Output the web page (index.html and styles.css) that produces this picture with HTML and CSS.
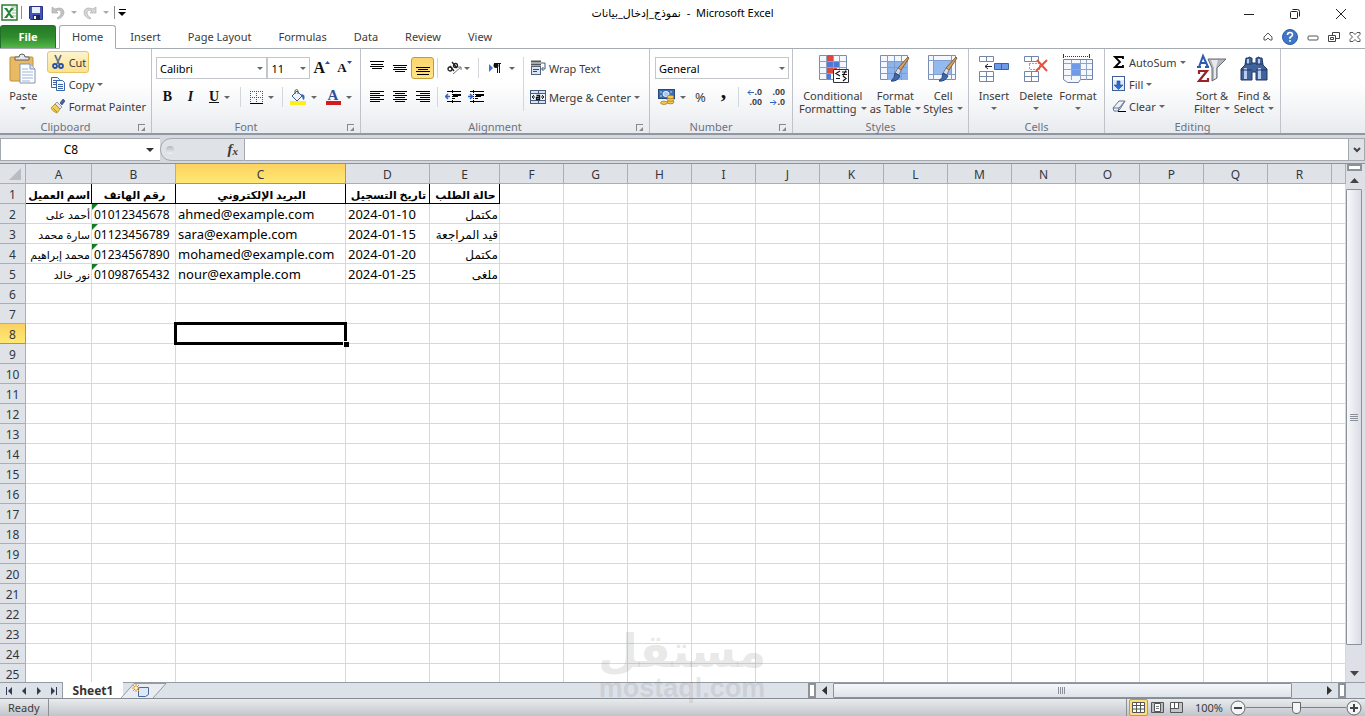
FILE: index.html
```html
<!DOCTYPE html>
<html lang="en">

<head>
    <meta charset="UTF-8">
    <meta name="viewport" content="width=device-width, initial-scale=1.0">
    <title>نموذج_إدخال_بيانات - Microsoft Excel</title>
    <link rel="stylesheet" href="styles.css">
</head>

<body>
    <header class="titlebar">
        <div class="quick">
            <svg width="17" height="17" viewBox="0 0 17 17"><rect x="1" y="1" width="15" height="15" fill="#fff" stroke="#2d7d32" stroke-width="1.5"/><path d="M10 3h5M11 6h4M11 9h4M11 12h4" stroke="#8bc08d"/><path d="M3 4h3l2 3 2-3h3l-4 5 4 5H10l-2-3-2 3H3l4-5z" fill="#23863a"/></svg>
            <span class="bar"></span>
            <button class="qbtn save" aria-label="Save"><svg width="14" height="14" viewBox="0 0 14 14"><path d="M.5.5h13v13h-12l-1-1z" fill="#4257b5" stroke="#26327f"/><path d="M3 1h8v6H3z" fill="#e9f0fb"/><path d="M4 9h7v5H4z" fill="#20264f"/><path d="M5 10h2v3H5z" fill="#fff"/></svg></button>
            <button class="qbtn" aria-label="Undo"><svg width="14" height="14" viewBox="0 0 14 14"><path d="M1 1v6h6L5 5q5-2 5 2 0 3-4 5l1 1q6-2 6-7Q12 0 4 3z" fill="#c3c3c3" stroke="#a5a5a5" stroke-width=".6"/></svg><i class="caret dim"></i></button>
            <button class="qbtn" aria-label="Redo"><svg width="14" height="14" viewBox="0 0 14 14"><path d="M13 1v6H7l2-2Q4 3 4 7q0 3 4 5l-1 1Q1 11 1 6 2 0 10 3z" fill="#d6d6d6" stroke="#a5a5a5" stroke-width=".6"/></svg><i class="caret dim"></i></button>
            <span class="bar"></span>
            <button class="more" aria-label="Customize Quick Access Toolbar"><i class="caret"></i></button>
        </div>
        <h1>نموذج_إدخال_بيانات&nbsp; - &nbsp;Microsoft Excel</h1>
        <div class="winbtns">
            <button aria-label="Minimize"><svg width="12" height="12"><path d="M1 6.5h10" stroke="#222"/></svg></button>
            <button aria-label="Restore"><svg width="12" height="12" fill="none" stroke="#222"><rect x="1.5" y="3.500" width="7" height="7" rx="1"/><path d="M3.500 1.500h5q2 0 2 2v5"/></svg></button>
            <button aria-label="Close"><svg width="12" height="12"><path d="M1 1l10 10M11 1L1 11" stroke="#222"/></svg></button>
        </div>
    </header>

    <nav class="tabs">
        <a class="file" href="#file">File</a>
        <a class="active" href="#home">Home</a>
        <a href="#insert">Insert</a>
        <a href="#layout">Page Layout</a>
        <a href="#formulas">Formulas</a>
        <a href="#data">Data</a>
        <a href="#review">Review</a>
        <a href="#view">View</a>
        <div class="tabtools">
            <button aria-label="Minimize ribbon"><svg width="10" height="10" fill="#fff" stroke="#555"><path d="M1 5l4-4 4 4v3H7L5 6 3 8H1z"/></svg></button>
            <button aria-label="Help"><svg width="16" height="16"><circle cx="8" cy="8" r="7.500" fill="#3f76c8" stroke="#2c5aa5"/><path d="M5.500 6q0-2.500 2.500-2.500t2.500 2.200Q10.500 7 8 8.500v1.200M8 11v1.800" fill="none" stroke="#fff" stroke-width="1.600"/></svg></button>
            <button aria-label="Minimize window"><svg width="12" height="12"><rect x="1" y="5" width="10" height="4" rx="1" fill="#fff" stroke="#555"/></svg></button>
            <button aria-label="Restore window"><svg width="12" height="12" fill="#fff" stroke="#444"><path d="M4.500 1.500h7v6h-7z"/><path d="M.5 4.500h7v6h-7z"/><path d="M2.500 6.500h3v2h-3z"/></svg></button>
            <button aria-label="Close window"><svg width="12" height="12" fill="#fff" stroke="#555"><path d="M1 1.500h3l2 2 2-2h3v2L8.500 6 11 8.500v2H8l-2-2-2 2H1v-2L3.500 6 1 3.500z"/></svg></button>
        </div>
    </nav>

    <section class="ribbon">
        <div class="group clipboard">
            <div class="tools">
                <button class="big">
                    <svg width="28" height="32" viewBox="0 0 28 32"><rect x="1" y="4" width="23" height="24" rx="1" fill="#e9b963" stroke="#c18f3c"/><path d="M6 6V4h4q0-3 3-3t3 3h4v3H6z" fill="#e6e8ec" stroke="#5a5f68"/><path d="M11 11h10l5 5v14H11z" fill="#fff" stroke="#7d92b5"/><path d="M21 11v5h5" fill="#dbe6f5" stroke="#7d92b5"/><path d="M13 16h6M13 19h11M13 22h11M13 25h11M13 28h8" stroke="#9db4d8"/></svg>
                    <span>Paste</span><i class="caret"></i>
                </button>
                <div class="stack">
                    <button class="small hot"><svg width="16" height="16" viewBox="0 0 16 16"><path d="M5 1l4 9M11 1L7 10" stroke="#64718a" stroke-width="1.800"/><circle cx="5" cy="12" r="2" fill="none" stroke="#2650a6" stroke-width="1.800"/><circle cx="11" cy="12" r="2" fill="none" stroke="#2650a6" stroke-width="1.800"/></svg>Cut</button>
                    <button class="small"><svg width="16" height="16" viewBox="0 0 16 16" fill="#f4f8ff" stroke="#3d63a8"><path d="M1.500 1.500h6l2 2v8h-8z"/><path d="M3 4.500h4M3 6.500h4M3 8.500h3"/><path d="M6.500 4.500h6l2 2v8h-8z"/><path d="M8 8.500h5M8 10.500h5M8 12.500h5"/></svg>Copy<i class="caret"></i></button>
                    <button class="small"><svg width="16" height="16" viewBox="0 0 16 16"><path d="M10 5l3-4 2 2-3 4z" fill="#4660a5" stroke="#26376e" stroke-width=".6"/><path d="M7 4l5 5-2 2-5-5z" fill="#e3e5ea" stroke="#74798a" stroke-width=".7"/><path d="M5 6l5 5-3 4q-4-1-6-5z" fill="#f2cf58" stroke="#a9852c" stroke-width=".8"/><path d="M3 10l4 4" stroke="#b88f2c"/></svg>Format Painter</button>
                </div>
            </div>
            <div class="caption">Clipboard<i class="launch"></i></div>
        </div>

        <div class="group font">
            <div class="tools rows">
                <div class="line">
                    <span class="combo face"><select aria-label="Font"><option>Calibri</option></select></span>
                    <span class="combo size"><select aria-label="Font size"><option>11</option></select></span>
                    <button class="tool serif grow" aria-label="Grow font">A<svg width="5" height="4"><path d="M0 3l2.500-3L5 3z" fill="#2b4d9b"/></svg></button>
                    <button class="tool serif shrink" aria-label="Shrink font">A<svg width="5" height="4"><path d="M0 0h5L2.500 3z" fill="#2b4d9b"/></svg></button>
                </div>
                <div class="line">
                    <button class="tool serif"><b>B</b></button>
                    <button class="tool serif"><em>I</em></button>
                    <button class="tool serif split"><u>U</u><i class="caret"></i></button>
                    <span class="sep"></span>
                    <button class="tool split" aria-label="Borders"><svg width="13" height="13"><path d="M.5 0v12M6.500 0v12M12.500 0v12M0 .5h13M0 6.500h13" stroke="#555" stroke-dasharray="1 1"/><path d="M0 12.500h13" stroke="#000"/></svg><i class="caret"></i></button>
                    <span class="sep"></span>
                    <button class="tool split" aria-label="Fill color"><svg width="16" height="16"><path d="M2 7l5-5 5 5-5 5z" fill="#eef3fa" stroke="#3b5c95"/><path d="M5 5V1.500q2-2 3 0V5" fill="none" stroke="#555"/><path d="M11 5q5 0 3 6-2-1-2-4z" fill="#3468b8"/><path d="M0 12h16v4H0z" fill="#ffee1c"/></svg><i class="caret"></i></button>
                    <button class="tool split fontcolor" aria-label="Font color"><span>A</span><i class="caret"></i></button>
                </div>
            </div>
            <div class="caption">Font<i class="launch"></i></div>
        </div>

        <div class="group alignment">
            <div class="tools">
                <div class="rows">
                    <div class="line">
                        <button class="tool" aria-label="Top align"><svg width="14" height="14"><path d="M0 .5h14M1 3.500h12M0 5.500h14M2 7.500h10" stroke="#000"/></svg></button>
                        <button class="tool" aria-label="Middle align"><svg width="14" height="14"><path d="M0 4.500h14M1 6.500h12M0 8.500h14M2 10.500h10" stroke="#000"/></svg></button>
                        <button class="tool on" aria-label="Bottom align"><svg width="14" height="14"><path d="M0 6.500h14M2 8.500h10M0 10.500h14M1 13.500h12" stroke="#000"/></svg></button>
                        <span class="sep"></span>
                        <button class="tool split" aria-label="Orientation"><svg width="16" height="14" viewBox="0 0 16 14"><g fill="none" stroke="#222" stroke-width="1.300"><circle cx="4" cy="8" r="2"/><path d="M4 5l4 5M6 1l5 6"/><circle cx="9.500" cy="4.500" r="2"/></g><path d="M7 13l8-7M12 6h3v3" fill="none" stroke="#777"/></svg><i class="caret"></i></button>
                        <span class="sep"></span>
                        <button class="tool split direction" aria-label="Text direction"><svg width="14" height="12"><path d="M1 2l4 4-4 4z" fill="#3f73d6"/><path d="M6 1h7v1H6zM9 1h1v10H9zM11 1h1v10h-1z" fill="#111"/><circle cx="8" cy="3.500" r="2.500" fill="#111"/></svg><i class="caret"></i></button>
                    </div>
                    <div class="line">
                        <button class="tool" aria-label="Align left"><svg width="14" height="12"><path d="M0 .5h14M0 2.500h10M0 4.500h14M0 6.500h10M0 8.500h14M0 10.500h10" stroke="#000"/></svg></button>
                        <button class="tool" aria-label="Center"><svg width="14" height="12"><path d="M0 .5h14M2 2.500h10M0 4.500h14M2 6.500h10M0 8.500h14M2 10.500h10" stroke="#000"/></svg></button>
                        <button class="tool" aria-label="Align right"><svg width="14" height="12"><path d="M0 .5h14M4 2.500h10M0 4.500h14M4 6.500h10M0 8.500h14M4 10.500h10" stroke="#000"/></svg></button>
                        <span class="sep"></span>
                        <button class="tool" aria-label="Decrease indent"><svg width="16" height="14"><path d="M2 1.500h14M7 4.500h9M7 6.500h6M7 8.500h3M2 11.500h14" stroke="#000"/><path d="M8 4h8v2H8z"/><path d="M7.500 0v14" stroke="#000" stroke-dasharray="1 1"/><path d="M5 6.500H1M3 4L0.500 6.500 3 9" fill="none" stroke="#3366c4" stroke-width="1.500"/></svg></button>
                        <button class="tool" aria-label="Increase indent"><svg width="16" height="14"><path d="M2 1.500h14M7 4.500h9M7 6.500h6M7 8.500h3M2 11.500h14" stroke="#000"/><path d="M8 4h8v2H8z"/><path d="M5.500 0v14" stroke="#000" stroke-dasharray="1 1"/><path d="M0 6.500h4M2 4l2.500 2.500L2 9" fill="none" stroke="#3366c4" stroke-width="1.500"/></svg></button>
                    </div>
                </div>
                <span class="sep tall"></span>
                <div class="rows">
                    <button class="small"><svg width="16" height="16"><path d="M1 1.500h10M1 4.500h10" stroke="#555" stroke-width="2"/><path d="M11 3h4v6h-3M13.500 7l-2 2 2 2" fill="none" stroke="#3e587f"/><rect x="1.500" y="6.500" width="9" height="8" fill="#d9e6f7" stroke="#52637e"/><path d="M3 9.500h6M3 11.500h4" stroke="#444"/></svg>Wrap Text</button>
                    <button class="small"><svg width="16" height="16"><rect x=".5" y="1.500" width="15" height="13" fill="#d4e3f6" stroke="#455a7c"/><path d="M1 4.500h14M1 11.500h14M8.500 2v2M8.500 12v2" stroke="#455a7c"/><path d="M1 5h14v6H1z" fill="#eef5fd"/><path d="M5 8H2M4 6L2 8l2 2M11 8h3M12 6l2 2-2 2" fill="none" stroke="#222"/><path d="M6.500 6.500h3v4h-3v-2h3" fill="none" stroke="#111" stroke-width="1.300"/></svg>Merge &amp; Center<i class="caret"></i></button>
                </div>
            </div>
            <div class="caption">Alignment<i class="launch"></i></div>
        </div>

        <div class="group number">
            <div class="tools rows">
                <div class="line">
                    <span class="combo format"><select aria-label="Number format"><option>General</option></select></span>
                </div>
                <div class="line">
                    <button class="tool split" aria-label="Accounting format"><svg width="17" height="16"><rect x=".5" y=".5" width="16" height="9" fill="#3e6fb4" stroke="#234780"/><ellipse cx="8" cy="5" rx="3" ry="2.500" fill="#a9c6ec" stroke="#e7f0fb"/><path d="M2 3h2M12 3h2M2 7h2" stroke="#bcd3f0"/><g fill="#f5cb55" stroke="#a87416" stroke-width=".8"><ellipse cx="12.500" cy="13" rx="3.500" ry="1.800"/><ellipse cx="12.500" cy="10.500" rx="3.500" ry="1.800"/><ellipse cx="12.500" cy="8" rx="3.500" ry="1.800"/><ellipse cx="6" cy="13.800" rx="3.500" ry="1.600"/></g></svg><i class="caret"></i></button>
                    <button class="tool percent">%</button>
                    <button class="tool serif comma"><b>,</b></button>
                    <span class="sep"></span>
                    <button class="tool decimals" aria-label="Increase decimal"><span><svg width="7" height="7"><path d="M7 3.500H1M3.500 1L1 3.500 3.500 6" fill="none" stroke="#2f62c0"/></svg>.0</span><span>.00</span></button>
                    <button class="tool decimals" aria-label="Decrease decimal"><span>.00</span><span><svg width="7" height="7"><path d="M0 3.500h6M3.500 1L6 3.500 3.500 6" fill="none" stroke="#2f62c0"/></svg>.0</span></button>
                </div>
            </div>
            <div class="caption">Number<i class="launch"></i></div>
        </div>

        <div class="group styles">
            <div class="tools">
                <button class="big wide">
                    <svg width="32" height="32" viewBox="0 0 32 32"><path d="M2.500 2.500h27v24h-27z" fill="#f4f8fe" stroke="#7a8db0"/><path d="M9 2h7v6H9zM9 14h11v6H9z" fill="#dc4a3f"/><path d="M9 8h13v6H9zM9 20h5v6H9z" fill="#5078d8"/><path d="M2 8.500h27M2 14.500h27M2 20.500h27M9.500 2v25M16.500 2v25M22.500 2v25" stroke="#8ea0c0"/><path d="M16.500 16.500h15v13h-15z" fill="#fff" stroke="#333"/><path d="M23 18l-4 2.500 4 2.500M19 25.500h4M25 19h5M25 21.500h5M29 17.500l-3 5M26 23l3 2.500-3 2.500" fill="none" stroke="#111" stroke-width="1.200"/></svg>
                    <span>Conditional</span><span>Formatting<i class="caret"></i></span>
                </button>
                <button class="big mid">
                    <svg width="32" height="32" viewBox="0 0 32 32"><path d="M1.500 2.500h27v24h-27z" fill="#f4f8fe" stroke="#7a8db0"/><path d="M8 9h21v18H8z" fill="#8db3ec"/><path d="M1 8.500h27M1 14.500h27M1 20.500h27M8.500 2v25M15.500 2v25M22.500 2v25" stroke="#7f9ccd"/><path d="M30 5l-8 12-3-2L29 4z" fill="#d9a05a" stroke="#865d34"/><path d="M22 17l-3-2-3 5 4 2z" fill="#d8dce3" stroke="#737b88"/><path d="M16 20l5 3q-3 6-9 5 4-3 4-8z" fill="#3f68af" stroke="#28447c"/></svg>
                    <span>Format</span><span>as Table<i class="caret"></i></span>
                </button>
                <button class="big">
                    <svg width="32" height="32" viewBox="0 0 32 32"><path d="M1.500 2.500h27v24h-27z" fill="#f4f8fe" stroke="#7a8db0"/><path d="M1 7.500h27M1 21.500h27M6.500 2v25M24.500 2v25" stroke="#7f9ccd"/><path d="M7 8h17v13H7z" fill="#94b9ef"/><path d="M30 5l-8 12-3-2L29 4z" fill="#d9a05a" stroke="#865d34"/><path d="M22 17l-3-2-3 5 4 2z" fill="#d8dce3" stroke="#737b88"/><path d="M16 20l5 3q-3 6-9 5 4-3 4-8z" fill="#3f68af" stroke="#28447c"/></svg>
                    <span>Cell</span><span>Styles<i class="caret"></i></span>
                </button>
            </div>
            <div class="caption">Styles</div>
        </div>

        <div class="group cells">
            <div class="tools">
                <button class="big">
                    <svg width="32" height="32" viewBox="0 0 32 32"><g fill="#fff" stroke="#7186ab"><path d="M1.500 3.500h14v5h-14zM8.500 3.500v5M1.500 18.500h14v10h-14zM8.500 18.500v10M1.500 23.500h14"/><path d="M16.500 10.500h14v6h-14z" fill="#6d9be9" stroke="#3d62a5"/><path d="M23.500 10.500v6" stroke="#3d62a5"/></g><path d="M14 13.500H7M10 11l-3 2.500 3 2.500" fill="none" stroke="#222"/></svg>
                    <span>Insert</span><i class="caret"></i>
                </button>
                <button class="big">
                    <svg width="32" height="32" viewBox="0 0 32 32"><path d="M4.500 3.500h14v5h-14zM11.500 3.500v5M4.500 18.500h14v10h-14zM11.500 18.500v10M4.500 23.500h14" fill="#fff" stroke="#7186ab"/><path d="M9.500 10.500h10v6h-10z" fill="none" stroke="#2c4780" stroke-dasharray="1 2"/><path d="M17 7l10 11M27 7L16 18" stroke="#e5533d" stroke-width="2"/></svg>
                    <span>Delete</span><i class="caret"></i>
                </button>
                <button class="big">
                    <svg width="32" height="32" viewBox="0 0 32 32"><path d="M1.500 1v4M27.500 1v4" stroke="#334"/><path d="M3 3.500h24" stroke="#334" stroke-dasharray="1 1"/><path d="M1.500 6.500h29v20h-12l-2 3h-11l-4-3z" fill="#f4f8fe" stroke="#6e82a8"/><path d="M10 11h8v11h-8z" fill="#6f9aea"/><path d="M2 10.500h28M2 16.500h28M2 22.500h28M9.500 7v20M18.500 7v20M24.500 7v20" stroke="#93a5c5"/></svg>
                    <span>Format</span><i class="caret"></i>
                </button>
            </div>
            <div class="caption">Cells</div>
        </div>

        <div class="group editing">
            <div class="tools">
                <div class="stack">
                    <button class="small"><svg width="14" height="14"><path d="M11 4V2H3l5 5-5 5h8v-2" fill="none" stroke="#000" stroke-width="1.800"/></svg>AutoSum<i class="caret"></i></button>
                    <button class="small"><svg width="14" height="16"><rect x=".5" y=".5" width="12" height="14" fill="#dfeafa" stroke="#3f5f9a"/><path d="M1 1h11v3H1z" fill="#fff"/><path d="M5 5h3v4h3l-4.500 4.500L2 9h3z" fill="#2f6bd6" stroke="#1d489b" stroke-width=".6"/></svg>Fill<i class="caret"></i></button>
                    <button class="small"><svg width="14" height="14"><path d="M1 9l6-7h6l-5 8-2 2H2z" fill="#eef1f6" stroke="#66748d"/><path d="M1 9h6l6-7M7 9l-1 3" fill="none" stroke="#66748d"/><path d="M6 12.500h8" stroke="#000"/></svg>Clear<i class="caret"></i></button>
                </div>
                <button class="big">
                    <svg width="32" height="32" viewBox="0 0 32 32"><path d="M12 6h18l-9 9v10l-5 3V15z" fill="#b4b7bd" stroke="#666a72"/><path d="M15 7h7l-2 8v10l-2 1V15z" fill="#e8e9ec"/><path d="M3 14L7 3l5 11M4 10h6M1 14h4M9 14h4" fill="none" stroke="#2f5cae" stroke-width="2"/><path d="M3 21v-3h8L3 28h9v-3" fill="none" stroke="#96242a" stroke-width="2.200"/></svg>
                    <span>Sort &amp;</span><span>Filter<i class="caret"></i></span>
                </button>
                <button class="big">
                    <svg width="32" height="32" viewBox="0 0 32 32"><path d="M8 5h2q2-2 3 0h1v5h4V5h1q2-2 3 0h2l1 7 4 4v11H18v-8h-4v8H3V16l4-4z" fill="#41629c" stroke="#203762"/><path d="M9 6h2v5H9zM20 6h2v5h-2zM6 15h3v11H6zM20 15h3v11h-3z" fill="#b7cdf0"/><path d="M3 17h11M18 17h11M7 11h7M18 11h7" stroke="#203762"/></svg>
                    <span>Find &amp;</span><span>Select<i class="caret"></i></span>
                </button>
            </div>
            <div class="caption">Editing</div>
        </div>
    </section>

    <section class="formulabar">
        <label class="namebox"><input type="text" value="C8" aria-label="Name Box"><i class="caret"></i></label>
        <div class="fx"><i class="knob"></i><button aria-label="Insert Function">f<small>x</small></button></div>
        <input class="formula" type="text" aria-label="Formula">
        <button class="expand" aria-label="Expand formula bar"><svg width="8" height="6"><path d="M1 1l3 3 3-3" fill="none" stroke="#444" stroke-width="2"/></svg></button>
    </section>

    <main class="workspace">
        <div class="sheet">
            <table id="grid"></table>
        </div>
        <div class="vscroll">
            <span class="splitter"></span>
            <button aria-label="Scroll up"><svg width="9" height="5"><path d="M0 5l4.500-5L9 5z" fill="#444"/></svg></button>
            <div class="thumb"><i class="grip"></i></div>
            <button class="down" aria-label="Scroll down"><svg width="9" height="5"><path d="M0 0h9L4.500 5z" fill="#444"/></svg></button>
        </div>
    </main>

    <footer class="sheetbar">
        <div class="sheetnav">
            <button aria-label="First sheet"><svg width="8" height="8"><path d="M1 0h1v8H1zM7 0v8L3 4z" fill="#333d4d"/></svg></button>
            <button aria-label="Previous sheet"><svg width="8" height="8"><path d="M6 0v8L2 4z" fill="#333d4d"/></svg></button>
            <button aria-label="Next sheet"><svg width="8" height="8"><path d="M2 0v8l4-4z" fill="#333d4d"/></svg></button>
            <button aria-label="Last sheet"><svg width="8" height="8"><path d="M6 0h1v8H6zM1 0v8l4-4z" fill="#333d4d"/></svg></button>
        </div>
        <a class="sheettab" href="#sheet1">Sheet1</a>
        <button class="newsheet" aria-label="Insert Worksheet"><svg width="46" height="16"><path d="M0 15L13 .5h32L32 15" fill="#e9edf2" stroke="#949ba5"/><path d="M17.500 4.500h10v7l-3 2h-7z" fill="#dce9fa" stroke="#4d6a9c"/><path d="M15 1v8M11 5h8M12 2l6 6M18 2l-6 6" stroke="#dc9433"/><circle cx="15" cy="5" r="1.500" fill="#fff4b8"/></svg></button>
        <div class="hscroll">
            <span class="splitter"></span>
            <button aria-label="Scroll left"><svg width="5" height="9"><path d="M5 0v9L0 4.500z" fill="#333"/></svg></button>
            <div class="htrack"><div class="hthumb"><i class="grip"></i></div></div>
            <button aria-label="Scroll right"><svg width="5" height="9"><path d="M0 0v9l5-4.500z" fill="#333"/></svg></button>
            <span class="splitter"></span>
        </div>
    </footer>

    <footer class="status">
        <span class="ready">Ready</span>
        <div class="views">
            <button class="on" aria-label="Normal"><svg width="13" height="11"><path d="M.5.5h12v10H.5zM.5 3.500h12M.5 7h12M4.500.5v10M8.500.5v10" fill="#fff" stroke="#555"/></svg></button>
            <button aria-label="Page Layout"><svg width="13" height="11"><path d="M.5.5h12v10H.5z" fill="#b9bdc3" stroke="#555"/><path d="M3.500 1.500h6v8h-6z" fill="#fff" stroke="#555"/><path d="M5 4.500h3M5 6.500h3" stroke="#777"/></svg></button>
            <button aria-label="Page Break Preview"><svg width="13" height="11"><path d="M.5.5h12v10H.5z" fill="#c3c6cb" stroke="#555"/><path d="M1 1h3v5H1zM5 1h3v5H5z" fill="#fff"/><path d="M4.500 0v6M8.500 0v6.500H0" fill="none" stroke="#555"/></svg></button>
        </div>
        <label class="zoom" for="zoom">100%</label>
        <button class="round" aria-label="Zoom out"><svg width="16" height="16"><circle cx="8" cy="8" r="7" fill="#f3f4f6" stroke="#666"/><path d="M4 8h8" stroke="#444" stroke-width="2"/></svg></button>
        <input id="zoom" type="range" min="0" max="200" value="100">
        <button class="round" aria-label="Zoom in"><svg width="16" height="16"><circle cx="8" cy="8" r="7" fill="#f3f4f6" stroke="#666"/><path d="M4 8h8M8 4v8" stroke="#444" stroke-width="2"/></svg></button>
    </footer>

    <div class="watermark">
        <p class="ar" lang="ar">مستقل</p>
        <p>mostaql.com</p>
    </div>

    <script src="script.js"></script>
</body>

</html>
```

FILE: styles.css
```css
* {
    box-sizing: border-box;
}

body {
    margin: 0;
    height: 100vh;
    display: flex;
    flex-direction: column;
    overflow: hidden;
    background-color: white;
    color: #3b3b3b;
    font-family: "Noto Sans", "DejaVu Sans", sans-serif;
    font-size: 11px;
    position: relative;
}

button {
    border: none;
    background: none;
    padding: 0;
    margin: 0;
    color: inherit;
    font: inherit;
    display: flex;
    align-items: center;
    justify-content: center;
}

svg {
    display: block;
    flex: none;
}

input,
select {
    font: inherit;
    color: black;
    margin: 0;
    border-radius: 0;
}

.caret {
    display: block;
    flex: none;
    border: 3px solid transparent;
    border-top-color: #666;
    border-bottom: none;
}

.caret.dim {
    border-top-color: #aaa;
}

/* title bar */
.titlebar {
    height: 25px;
    display: grid;
    grid-template-columns: 1fr auto 1fr;
    align-items: center;
}

.quick {
    display: flex;
    align-items: center;
    padding-left: 1px;
    height: 23px;
}

.bar {
    width: 1px;
    height: 13px;
    background-color: #8c8c8c;
    margin: 0 3px;
}

.qbtn {
    gap: 6px;
    margin-left: 4px;
    margin-right: 2px;
}

.qbtn.save {
    margin-right: 4px;
}

.more {
    flex-direction: column;
    gap: 2px;
}

.more::before {
    content: "";
    width: 7px;
    height: 1px;
    background-color: black;
}

.more .caret {
    border-width: 4px;
    border-bottom: none;
    border-top-color: black;
}

.titlebar h1 {
    margin: 0;
    font-size: 11px;
    font-weight: normal;
    color: black;
}

.winbtns {
    display: flex;
    justify-content: flex-end;
    align-self: end;
    gap: 34px;
    padding-right: 18px;
    padding-bottom: 5px;
}

/* ribbon tabs */
.tabs {
    display: flex;
    height: 24px;
    border-bottom: 1px solid #a6abb2;
}

.tabs a {
    height: 24px;
    line-height: 24px;
    padding: 0 13px;
    margin-right: 1px;
    color: #3b3b3b;
    text-decoration: none;
    border-radius: 3px 3px 0 0;
    white-space: nowrap;
}

.tabs .file {
    width: 56px;
    height: 23px;
    padding: 0;
    margin-right: 3px;
    text-align: center;
    line-height: 22px;
    color: white;
    font-weight: bold;
    background: linear-gradient(#237a25, #2f8a2d 50%, #54b847);
    border: 1px solid #20702a;
    border-bottom: none;
}

.tabs .active {
    line-height: 22px;
    padding: 0 12px;
    background-color: white;
    border: 1px solid #a6abb2;
    border-bottom-color: white;
}

.tabtools {
    display: flex;
    gap: 9px;
    margin-left: auto;
    padding-right: 4px;
}

/* ribbon */
.ribbon {
    display: flex;
    height: 86px;
    flex: none;
    background: linear-gradient(white 40%, #e8ebef);
    border-bottom: 2px solid #92969f;
}

.group {
    display: flex;
    flex-direction: column;
    flex: none;
    border-right: 1px solid #bfc3c9;
}

.clipboard {
    width: 152px;
}

.clipboard .big {
    margin-right: 2px;
}

.font {
    width: 209px;
}

.alignment {
    width: 289px;
}

.number {
    width: 143px;
}

.styles,
.editing {
    width: 176px;
}

.cells {
    width: 136px;
}

.tools {
    display: flex;
    height: 69px;
    padding: 2px 4px 0;
}

.clipboard .tools {
    padding: 2px 2px 0;
}

.caption {
    position: relative;
    height: 15px;
    line-height: 17px;
    text-align: center;
    padding-right: 20px;
    color: #6b7280;
}

.styles .caption,
.cells .caption,
.editing .caption {
    padding-right: 0;
}

.launch {
    position: absolute;
    right: 6px;
    top: 6px;
    width: 7px;
    height: 7px;
    border-left: 1px solid #888;
    border-top: 1px solid #888;
}

.launch::after {
    content: "";
    position: absolute;
    right: 0;
    bottom: 0;
    border: 2px solid #888;
    border-left-color: transparent;
    border-top-color: transparent;
}

.big {
    flex-direction: column;
    justify-content: flex-start;
    align-self: flex-start;
    width: 42px;
    line-height: 13px;
    padding-top: 2px;
    white-space: nowrap;
}

.big svg {
    height: 32px;
    margin-bottom: 4px;
}

.big span {
    display: flex;
    align-items: center;
    gap: 4px;
}

.big > .caret {
    margin-top: 5px;
}

.big.wide {
    width: 72px;
}

.big.mid {
    width: 54px;
}

.stack {
    display: flex;
    flex-direction: column;
    align-items: flex-start;
}

.small {
    height: 22px;
    gap: 3px;
    padding: 0 2px;
    justify-content: flex-start;
    white-space: nowrap;
    border: 1px solid transparent;
}

.clipboard .big {
    width: 44px;
}

.hot {
    border-color: #e8c562;
    border-radius: 3px;
    background: linear-gradient(#fdf3cf, #fce28d);
}

.rows {
    display: flex;
    flex-direction: column;
    gap: 7px;
    padding-top: 8px;
}

.line {
    display: flex;
    align-items: center;
    height: 22px;
}

.tool {
    width: 23px;
    height: 22px;
}

.tool.split {
    width: 38px;
    gap: 6px;
}

.tool.on {
    border: 1px solid #c29b3c;
    border-radius: 3px;
    background: linear-gradient(#fbd56f, #ffe684);
}

.serif {
    font-family: "Liberation Serif", serif;
    font-size: 14px;
    font-weight: bold;
    color: #111;
}

.grow {
    font-size: 16px;
}

.shrink {
    font-size: 13px;
}

.grow svg,
.shrink svg {
    align-self: flex-start;
    margin-top: 4px;
}

.sep {
    width: 1px;
    height: 20px;
    margin: 0 3px;
    background-color: #d3d6da;
}

.sep.tall {
    height: 54px;
    margin: 8px 3px 0;
}

.combo {
    position: relative;
    display: flex;
}

.combo select {
    appearance: none;
    width: 100%;
    height: 22px;
    padding: 0 3px;
    border: 1px solid #c3c7cc;
    background-color: white;
}

.combo::after {
    content: "";
    position: absolute;
    right: 4px;
    top: 10px;
    border: 3px solid transparent;
    border-top-color: #666;
    border-bottom: none;
}

.face {
    width: 112px;
}

.size {
    width: 43px;
}

.format {
    width: 134px;
}

.font .tools {
    padding: 8px 4px 0;
}

.font .split {
    width: 35px;
    gap: 5px;
}

.fontcolor span {
    width: 15px;
    height: 16px;
    line-height: 13px;
    font-family: "Liberation Serif", serif;
    font-size: 15px;
    font-weight: bold;
    color: #2f4f9a;
    border-bottom: 4px solid #d11d1d;
}

.alignment .tools {
    padding-top: 0;
}

.alignment .split {
    width: 34px;
    gap: 2px;
}

.alignment .direction {
    width: 38px;
    gap: 7px;
}

.percent {
    font-size: 13px;
}

.comma {
    font-size: 22px;
    line-height: 10px;
    align-items: flex-start;
}

.number .tools {
    padding: 8px 3px 0 5px;
}

.number .split {
    width: 34px;
    gap: 5px;
}

.decimals {
    flex-direction: column;
    align-items: flex-end;
    padding-right: 3px;
    font-family: "Liberation Sans", Arial, sans-serif;
    font-size: 9px;
    line-height: 10px;
    font-weight: bold;
}

.decimals span {
    display: flex;
    align-items: center;
}

.editing .stack {
    width: 82px;
}

/* formula bar */
.formulabar {
    display: flex;
    height: 28px;
    flex: none;
    padding: 3px 0 2px;
    background-color: #d5d9df;
}

.namebox {
    display: flex;
    align-items: center;
    width: 160px;
    background-color: white;
    border: 1px solid #a4a9b0;
    border-right: none;
}

.namebox input {
    width: 140px;
    border: none;
    outline: none;
    padding: 0;
    text-align: center;
    font-size: 12px;
}

.namebox .caret {
    border-width: 4px;
    border-bottom: none;
    border-top-color: #333;
    margin-left: 5px;
}

.fx {
    display: flex;
    align-items: center;
    justify-content: space-between;
    width: 85px;
    padding: 0 6px 0 5px;
    background-color: #dfe2e7;
    border: 1px solid #a4a9b0;
    border-radius: 11px 0 0 11px;
}

.knob {
    width: 8px;
    height: 8px;
    border-radius: 4px;
    background: linear-gradient(#b3b8bf, #f0f2f4);
}

.fx button {
    font-family: "Liberation Serif", serif;
    font-size: 15px;
    font-style: italic;
    font-weight: bold;
}

.fx small {
    font-size: 11px;
    padding-top: 3px;
}

.formula {
    flex: 1;
    border: 1px solid #a4a9b0;
    border-left: none;
    outline: none;
}

.expand {
    width: 16px;
    background-color: #dfe2e7;
    border: 1px solid #a4a9b0;
    border-left: none;
}

/* grid */
.workspace {
    display: flex;
    flex: 1;
    min-height: 0;
    border-top: 1px solid #8e949c;
}

.sheet {
    flex: 1;
    overflow: hidden;
}

#grid {
    table-layout: fixed;
    width: 100%;
    border-collapse: separate;
    border-spacing: 0;
    font-size: 13px;
    color: black;
}

#grid th,
#grid td {
    position: relative;
    height: 20px;
    padding: 2px 2px 0;
    line-height: 17px;
    white-space: nowrap;
    border-right: 1px solid #d6d8da;
    border-bottom: 1px solid #d6d8da;
}

#grid th {
    font-size: 12px;
    font-weight: normal;
    color: #33373d;
    background-color: #dfe3e8;
    border-color: #a9afb7;
}

#grid col {
    width: 64px;
}

#grid col.rowhead {
    width: 26px;
}

#grid col.a {
    width: 66px;
}

#grid col.b,
#grid col.d {
    width: 84px;
}

#grid col.c {
    width: 170px;
}

#grid col.e {
    width: 70px;
}

#grid col.rest {
    width: auto;
}

#grid th.current {
    border-color: #c3913c;
    background: linear-gradient(#fbd262, #ffe873);
}

#grid td.phone {
    font-size: 12px;
}

#grid td.phone::before {
    content: "";
    position: absolute;
    left: 0;
    top: 0;
    border: 3px solid #157a24;
    border-right-color: transparent;
    border-bottom-color: transparent;
}

#grid td[dir="rtl"] {
    font-size: 12px;
    text-align: right;
}

#grid td.name {
    font-size: 11px;
}

#grid td.head {
    font-size: 11px;
    font-weight: bold;
    text-align: center;
    border-color: black;
}

.corner::after {
    content: "";
    position: absolute;
    right: 4px;
    bottom: 3px;
    border: 6px solid #b9bdc3;
    border-left-color: transparent;
    border-top-color: transparent;
}

.cursor {
    position: absolute;
    inset: -2px;
    border: 3px solid black;
    z-index: 1;
}

.cursor::after {
    content: "";
    position: absolute;
    right: -5px;
    bottom: -5px;
    width: 5px;
    height: 5px;
    background-color: black;
    border-left: 1px solid white;
    border-top: 1px solid white;
    box-sizing: content-box;
}

.vscroll {
    display: flex;
    flex-direction: column;
    width: 19px;
    padding-right: 3px;
    background-color: #dde1e7;
}

.vscroll .splitter {
    height: 7px;
    margin-left: 1px;
    border: 2px solid #8d9299;
    background-color: white;
}

.vscroll button {
    height: 18px;
}

.thumb {
    flex: 1;
    margin-bottom: 19px;
    display: flex;
    align-items: center;
    justify-content: center;
    border: 1px solid #8b929c;
    border-radius: 1px;
    background: linear-gradient(to right, #f7f8fa, #d9dde4);
}

.grip {
    width: 8px;
    height: 7px;
    background: repeating-linear-gradient(#8a9099 0 1px, transparent 1px 2px);
}

/* sheet tabs */
.sheetbar {
    display: flex;
    height: 17px;
    flex: none;
    background-color: #dde2e9;
    border-top: 1px solid #969ca5;
    border-bottom: 1px solid #858b93;
}

.sheetnav {
    display: flex;
    align-items: center;
    gap: 7px;
    width: 63px;
    padding-left: 5px;
    border-right: 1px solid #969ca5;
}

.sheettab {
    width: 60px;
    margin-top: -1px;
    line-height: 18px;
    text-align: center;
    font-size: 12px;
    font-weight: bold;
    color: #333;
    text-decoration: none;
    background-color: white;
}

.newsheet {
    margin-left: -2px;
}

.hscroll {
    display: flex;
    flex: 1;
    max-width: 557px;
    margin-left: auto;
    padding-right: 19px;
}

.hscroll .splitter {
    width: 8px;
    border: 2px solid #8d9299;
    background-color: white;
}

.hscroll button {
    width: 17px;
}

.htrack {
    flex: 1;
}

.hthumb {
    width: 94%;
    height: 15px;
    display: flex;
    align-items: center;
    justify-content: center;
    border: 1px solid #8b929c;
    border-radius: 1px;
    background: linear-gradient(#f5f7fa, #dfe3ea);
}

.hthumb .grip {
    background: repeating-linear-gradient(to right, #8a9099 0 1px, transparent 1px 2px);
}

/* status bar */
.status {
    display: flex;
    align-items: center;
    height: 17px;
    flex: none;
    padding-right: 3px;
    background: linear-gradient(#e9ebee, #c1c5ca);
}

.ready {
    width: 49px;
    padding-left: 8px;
    line-height: 19px;
    border-right: 1px solid #8c9198;
}

.views {
    display: flex;
    margin-left: auto;
    padding-left: 2px;
    border-left: 1px solid #8c9198;
}

.views button {
    width: 19px;
    height: 17px;
}

.views .on {
    border: 1px solid #c29b3c;
    border-radius: 2px;
    background-color: #ffdf79;
}

.zoom {
    margin: 0 7px 0 9px;
    line-height: 19px;
}

#zoom {
    appearance: none;
    width: 100px;
    height: 16px;
    background: linear-gradient(#7d828a, #7d828a) center / 100% 1px no-repeat;
}

#zoom::-webkit-slider-thumb {
    appearance: none;
    width: 9px;
    height: 12px;
    background-color: #f4f5f7;
    border: 1px solid #666;
    border-radius: 1px 1px 5px 5px;
}

/* watermark over the grid */
.watermark {
    position: absolute;
    left: 600px;
    bottom: 14px;
    width: 164px;
    display: flex;
    flex-direction: column;
    align-items: center;
    color: rgba(120, 120, 120, 0.18);
    font-family: "Liberation Sans", Arial, sans-serif;
    font-size: 27px;
    font-weight: bold;
    line-height: 27px;
    pointer-events: none;
}

.watermark p {
    margin: 0;
}

.watermark .ar {
    font-family: "DejaVu Sans", sans-serif;
    font-size: 46px;
    line-height: 48px;
}
```

FILE: script.js
```js
const columns = 'ABCDEFGHIJKLMNOPQR'.split('');
const current = { col: 'C', row: 8 };
const data = [
    ['اسم العميل', 'رقم الهاتف', 'البريد الإلكتروني', 'تاريخ التسجيل', 'حالة الطلب'],
    ['أحمد على', '01012345678', 'ahmed@example.com', '2024-01-10', 'مكتمل'],
    ['سارة محمد', '01123456789', 'sara@example.com', '2024-01-15', 'قيد المراجعة'],
    ['محمد إبراهيم', '01234567890', 'mohamed@example.com', '2024-01-20', 'مكتمل'],
    ['نور خالد', '01098765432', 'nour@example.com', '2024-01-25', 'ملغى']
];

const grid = document.getElementById('grid');

let html = '<colgroup><col class="rowhead">';
columns.forEach(c => {
    html += `<col class="${c.toLowerCase()}">`;
});
html += '<col class="rest"></colgroup><tr><th class="corner"></th>';
columns.forEach(c => {
    html += `<th scope="col" class="${c === current.col ? 'current' : ''}">${c}</th>`;
});
html += '<th></th></tr>';

for (let r = 1; r <= 25; r++) {
    html += `<tr><th scope="row" class="${r === current.row ? 'current' : ''}">${r}</th>`;
    columns.forEach((c, i) => {
        const text = data[r - 1] && data[r - 1][i] ? data[r - 1][i] : '';
        const rtl = /[\u0600-\u06ff]/.test(text) ? ' dir="rtl"' : '';
        let cls = '';
        if (text && r === 1) cls = 'head';
        if (text && r > 1 && c === 'A') cls = 'name';
        if (text && r > 1 && c === 'B') cls = 'phone';
        // the selected cell gets the thick frame
        const frame = r === current.row && c === current.col ? '<div class="cursor"></div>' : '';
        html += `<td class="${cls}"${rtl}>${text}${frame}</td>`;
    });
    html += '<td></td></tr>';
}

grid.innerHTML = html;
```
